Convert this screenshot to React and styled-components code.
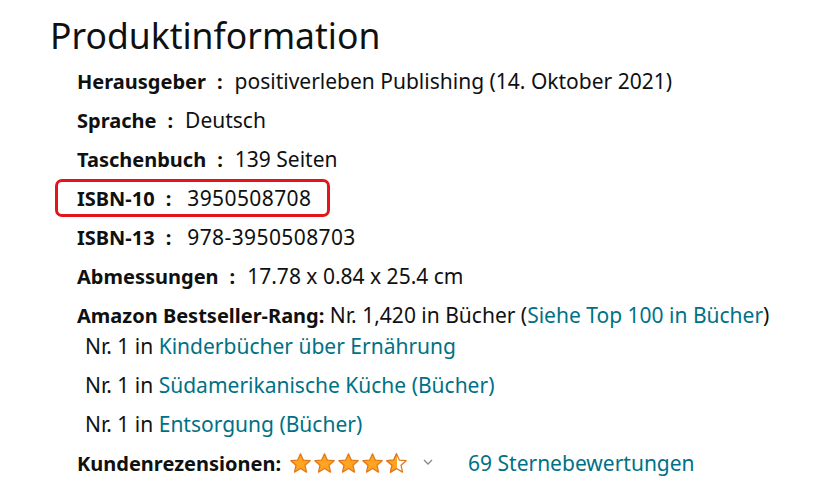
import React from "react";
import styled, { createGlobalStyle } from "styled-components";

const Global = createGlobalStyle`
  html, body { margin: 0; padding: 0; background: #ffffff; }
  body { font-family: "Noto Sans", "Open Sans", Arial, sans-serif; color: #0F1111; }
`;

const Page = styled.div`
  width: 822px;
  height: 502px;
  box-sizing: border-box;
  padding: 12px 0 0 50px;
  overflow: hidden;
`;

const Title = styled.h2`
  margin: 0 0 11px 0;
  font-size: 35.5px;
  font-weight: 400;
  line-height: 46px;
  color: #0F1111;
`;

const List = styled.ul`
  list-style: none;
  margin: 0;
  padding: 0 0 0 27px;
  display: flex;
  flex-direction: column;
  gap: 15px;
  font-size: 21px;
`;

const Item = styled.li`
  display: flex;
  flex-direction: column;
`;

const Line = styled.div`
  display: flex;
  align-items: center;
  height: 24px;
  white-space: nowrap;
`;

const Highlight = styled.div`
  display: flex;
  align-items: center;
  align-self: flex-start;
  height: 38px;
  box-sizing: border-box;
  margin: -7px 0 -7px -22px;
  padding: 0 16px 0 19px;
  border: 3px solid #e3141c;
  border-radius: 7px;
  white-space: nowrap;
`;

const Label = styled.span`
  font-weight: 700;
  font-size: 20px;
`;

const Sep = styled.span`
  font-weight: 700;
  font-size: 20px;
  margin: 0 ${(p) => p.$after || 12}px 0 11px;
`;

const Digits = styled.span`
  letter-spacing: 0.4px;
`;

const SubList = styled.ul`
  list-style: none;
  margin: 7px 0 0 0;
  padding: 0 0 0 8px;
  display: flex;
  flex-direction: column;
  gap: 15px;
`;

const SubItem = styled.li`
  display: flex;
  align-items: center;
  height: 24px;
  white-space: nowrap;
`;

const Link = styled.a`
  color: #007185;
  text-decoration: none;
  margin-left: ${(p) => p.$ml || 0}px;
`;

const Stars = styled.span`
  display: inline-flex;
  gap: 1px;
  margin-left: 8px;
`;

const Chevron = styled.span`
  display: inline-flex;
  margin-left: 14px;
  margin-top: -2px;
`;

const STAR = "M12 1.8l2.9 6.6 7.2.7-5.4 4.8 1.6 7.1L12 17.3 5.7 21l1.6-7.1L1.9 9.1l7.2-.7z";

function Star({ half }) {
  return (
    <svg width="23" height="23" viewBox="0 0 24 24">
      <defs>
        <clipPath id="halfclip">
          <rect x="0" y="0" width="12.4" height="24" />
        </clipPath>
      </defs>
      {half ? (
        <>
          <path d={STAR} fill="#ffffff" stroke="#de7921" strokeWidth="1.3" strokeLinejoin="round" />
          <path d={STAR} fill="#ffa41c" stroke="#de7921" strokeWidth="1.3" strokeLinejoin="round" clipPath="url(#halfclip)" />
        </>
      ) : (
        <path d={STAR} fill="#ffa41c" stroke="#de7921" strokeWidth="1.3" strokeLinejoin="round" />
      )}
    </svg>
  );
}

function Row({ label, after, children }) {
  return (
    <Item>
      <Line>
        <Label>{label}</Label>
        <Sep $after={after}>:</Sep>
        {children}
      </Line>
    </Item>
  );
}

export default function App() {
  return (
    <Page>
      <Global />
      <Title>Produktinformation</Title>
      <List>
        <Row label="Herausgeber">positiverleben Publishing (14. Oktober 2021)</Row>
        <Row label="Sprache">Deutsch</Row>
        <Row label="Taschenbuch">139 Seiten</Row>
        <Item>
          <Line>
            <Highlight>
              <Label>ISBN-10</Label>
              <Sep $after={16}>:</Sep>
              <Digits>3950508708</Digits>
            </Highlight>
          </Line>
        </Item>
        <Row label="ISBN-13" after={16}>
          <Digits>978-3950508703</Digits>
        </Row>
        <Row label="Abmessungen">17.78 x 0.84 x 25.4 cm</Row>
        <Item>
          <Line>
            <Label>Amazon Bestseller-Rang:</Label>
            &nbsp;Nr. 1,420 in Bücher (<Link href="#">Siehe Top 100 in Bücher</Link>)
          </Line>
          <SubList>
            <SubItem>
              Nr. 1 in&nbsp;<Link href="#">Kinderbücher über Ernährung</Link>
            </SubItem>
            <SubItem>
              Nr. 1 in&nbsp;<Link href="#">Südamerikanische Küche (Bücher)</Link>
            </SubItem>
            <SubItem>
              Nr. 1 in&nbsp;<Link href="#">Entsorgung (Bücher)</Link>
            </SubItem>
          </SubList>
        </Item>
        <Item>
          <Line>
            <Label>Kundenrezensionen:</Label>
            <Stars>
              <Star />
              <Star />
              <Star />
              <Star />
              <Star half />
            </Stars>
            <Chevron>
              <svg width="12" height="12" viewBox="0 0 12 12">
                <path d="M2 4l4 4 4-4" fill="none" stroke="#888c8c" strokeWidth="1.4" />
              </svg>
            </Chevron>
            <Link href="#" $ml={34}>69 Sternebewertungen</Link>
          </Line>
        </Item>
      </List>
    </Page>
  );
}
